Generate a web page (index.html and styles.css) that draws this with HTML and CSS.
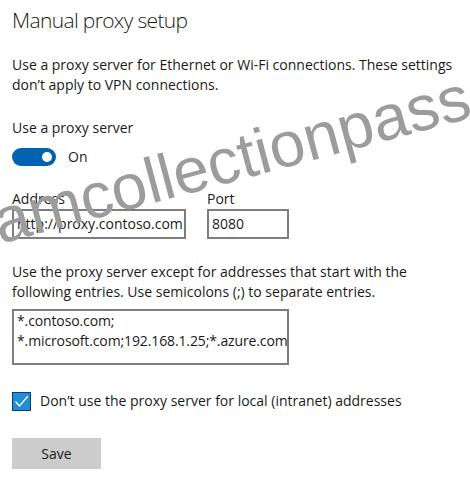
FILE: index.html
```html
<!DOCTYPE html>
<html>
<head>
<meta charset="utf-8">
<link rel="stylesheet" href="styles.css">
</head>
<body>
<div class="page">
  <h1 class="title">Manual proxy setup</h1>
  <p class="desc">Use a proxy server for Ethernet or Wi-Fi connections. These settings don’t apply to VPN connections.</p>

  <div class="label use-label">Use a proxy server</div>
  <div class="toggle-row">
    <span class="toggle"><span class="knob"></span></span>
    <span class="toggle-text">On</span>
  </div>

  <div class="fields">
    <div class="field">
      <div class="label">Address</div>
      <div class="input addr">http://proxy.contoso.com</div>
    </div>
    <div class="field">
      <div class="label">Port</div>
      <div class="input port">8080</div>
    </div>
  </div>

  <p class="desc except">Use the proxy server except for addresses that start with the following entries. Use semicolons (;) to separate entries.</p>
  <div class="textarea">*.contoso.com;<br>*.microsoft.com;192.168.1.25;*.azure.com</div>

  <div class="check-row">
    <span class="checkbox">
      <svg width="17" height="17" viewBox="0 0 17 17"><path d="M2.5 8.5 L6.5 13 L15 3" fill="none" stroke="#ffffff" stroke-width="1.3"/></svg>
    </span>
    <span class="check-text">Don’t use the proxy server for local (intranet) addresses</span>
  </div>

  <div class="save">Save</div>

  <span class="watermark">amcollectionpass</span>
</div>
</body>
</html>
```

FILE: styles.css
```css
html, body {
  margin: 0;
  padding: 0;
  background: #ffffff;
}
.page {
  position: relative;
  width: 470px;
  height: 480px;
  overflow: hidden;
  padding: 6px 12px 0 12px;
  box-sizing: border-box;
  font-family: "Open Sans", "Noto Sans", sans-serif;
  color: #1a1a1a;
  font-size: 14px;
}
.title {
  margin: 0;
  font-size: 21px;
  font-weight: 300;
  line-height: 28px;
  color: #1a1a1a;
  letter-spacing: -0.65px;
}
.desc {
  margin: 21px 0 0 0;
  line-height: 20px;
  width: 450px;
}
.label {
  line-height: 20px;
}
.use-label {
  margin-top: 23px;
}
.toggle-row {
  display: flex;
  align-items: center;
  gap: 12px;
  margin-top: 9px;
}
.toggle {
  position: relative;
  width: 44px;
  height: 18px;
  border-radius: 9px;
  background: #0063b1;
  display: inline-block;
}
.knob {
  position: absolute;
  right: 4px;
  top: 4px;
  width: 10px;
  height: 10px;
  border-radius: 50%;
  background: #ffffff;
}
.toggle-text {
  line-height: 20px;
}
.fields {
  display: flex;
  gap: 21px;
  margin-top: 22px;
}
.field .label {
  line-height: 20px;
}
.input {
  box-sizing: border-box;
  height: 30px;
  border: 2px solid #7d7d7d;
  padding: 0 3px;
  line-height: 26px;
  white-space: nowrap;
  overflow: hidden;
}
.addr { width: 174px; }
.port { width: 82px; }
.except {
  margin-top: 23px;
}
.textarea {
  box-sizing: border-box;
  width: 277px;
  height: 56px;
  margin-top: 7px;
  border: 2px solid #7d7d7d;
  padding: 0 0 0 3px;
  line-height: 20px;
  white-space: nowrap;
  overflow: hidden;
  letter-spacing: -0.12px;
}
.check-row {
  display: flex;
  align-items: center;
  gap: 9px;
  margin-top: 26px;
}
.checkbox {
  box-sizing: border-box;
  width: 19px;
  height: 19px;
  background: #1e8fd6;
  border: 1px solid #0b3e66;
  display: flex;
  align-items: center;
  justify-content: center;
}
.checkbox svg { display: block; }
.check-text {
  line-height: 20px;
}
.save {
  width: 89px;
  height: 31px;
  margin-top: 27px;
  background: #cccccc;
  text-align: center;
  line-height: 31px;
  color: #1a1a1a;
}
.watermark {
  position: absolute;
  left: 0;
  top: 190px;
  font-family: "Liberation Sans", Arial, sans-serif;
  font-size: 64px;
  line-height: 64px;
  color: #9c9c9c;
  transform-origin: 0 54px;
  transform: rotate(-15deg);
  white-space: nowrap;
}
```
